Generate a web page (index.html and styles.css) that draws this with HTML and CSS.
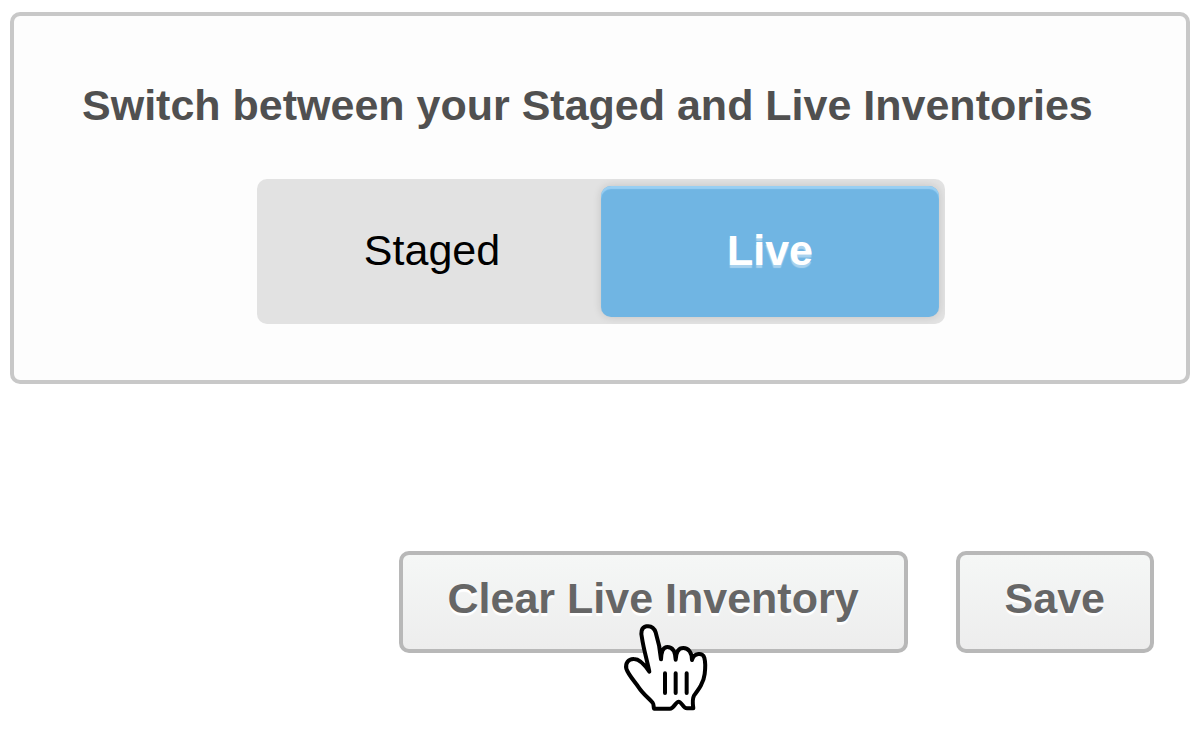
FILE: index.html
```html
<!DOCTYPE html>
<html lang="en">
<head>
<meta charset="utf-8">
<meta name="viewport" content="width=device-width, initial-scale=1">
<title>Inventory</title>
<link rel="stylesheet" href="styles.css">
</head>
<body>
<main class="page">
  <section class="card" aria-labelledby="switch-title">
    <h1 class="card-title" id="switch-title">Switch between your Staged and Live Inventories</h1>
    <div class="toggle" role="group" aria-labelledby="switch-title">
      <button class="toggle-option" type="button" aria-pressed="false">Staged</button>
      <button class="toggle-option toggle-option-active" type="button" aria-pressed="true">Live</button>
    </div>
  </section>
  <div class="actions">
    <div class="pointed">
      <button class="button" type="button">Clear Live Inventory</button>
      <svg class="pointer" viewBox="0 0 330 330" aria-hidden="true">
        <path class="pointer-hand" d="M118 185C106 167 89 147 72 147C55 146 45 160 49 176C54 193 72 212 86 232C99 252 118 266 128 278C132 283 130 290 132 296L180 296C192 296 197 275 206 275C215 275 219 295 231 295L250 295C248 282 246 268 252 257C267 237 281 218 284 192C286 176 287 158 283 143C279 127 252 128 246 150C246 129 236 114 220 114C207 114 198 124 197 149C196 126 188 111 172 111C160 111 154 122 153 148C151 121 144 89 137 67C132 52 121 47 109 49C93 52 92 69 96 84C101 119 112 153 118 185Z"/>
        <path class="pointer-line" d="M165 190V249M197 190V249M230 190V249"/>
      </svg>
    </div>
    <button class="button" type="button">Save</button>
  </div>
</main>
</body>
</html>
```
FILE: styles.css
```css
* {
  box-sizing: border-box;
}

body {
  margin: 0;
  background: #fff;
  font-family: "Liberation Sans", Arial, sans-serif;
  font-size: 43px;
  line-height: 50px;
}

.page {
  padding: 12px 10px 80px;
}

.card {
  padding: 64px 66px 56px 68px;
  border: 4px solid #c8c8c8;
  border-radius: 10px;
  background: #fdfdfd;
}

.card-title {
  margin: 0 0 49px;
  color: #505050;
  font-size: 43px;
  font-weight: bold;
}

.toggle {
  display: grid;
  grid-template-columns: 1fr 1fr;
  max-width: 688px;
  margin: 0 auto;
  padding: 7px 6px;
  overflow: hidden;
  border-radius: 10px;
  background: #e2e2e2;
}

.toggle-option {
  padding: 39px 20px 42px;
  border: 0;
  border-radius: 10px;
  background: transparent;
  color: #000;
  font: inherit;
}

.toggle-option-active {
  background: #70b5e3;
  box-shadow: inset 0 3px 1px #98cff3, 0 0 8px rgba(0, 0, 0, 0.14);
  color: #fff;
  font-weight: bold;
  text-shadow: 0 3px 1px rgba(255, 255, 255, 0.4);
}

.actions {
  display: flex;
  flex-wrap: wrap;
  justify-content: flex-end;
  gap: 48px;
  margin-top: 167px;
  padding-right: 36px;
}

.pointed {
  position: relative;
}

.button {
  display: block;
  padding: 18px 45px 26px;
  border: 4px solid #b8b8b8;
  border-radius: 10px;
  background: linear-gradient(#f5f7f6, #ededed);
  color: #666;
  font: inherit;
  font-weight: bold;
  text-shadow: 0 3px 1px #fff;
}

.pointer {
  position: absolute;
  top: 59px;
  left: 211px;
  width: 110px;
  height: 110px;
  pointer-events: none;
}

.pointer-hand {
  fill: #fff;
  stroke: #000;
  stroke-width: 12;
  stroke-linejoin: round;
}

.pointer-line {
  fill: none;
  stroke: #000;
  stroke-width: 12;
  stroke-linecap: round;
}
```
